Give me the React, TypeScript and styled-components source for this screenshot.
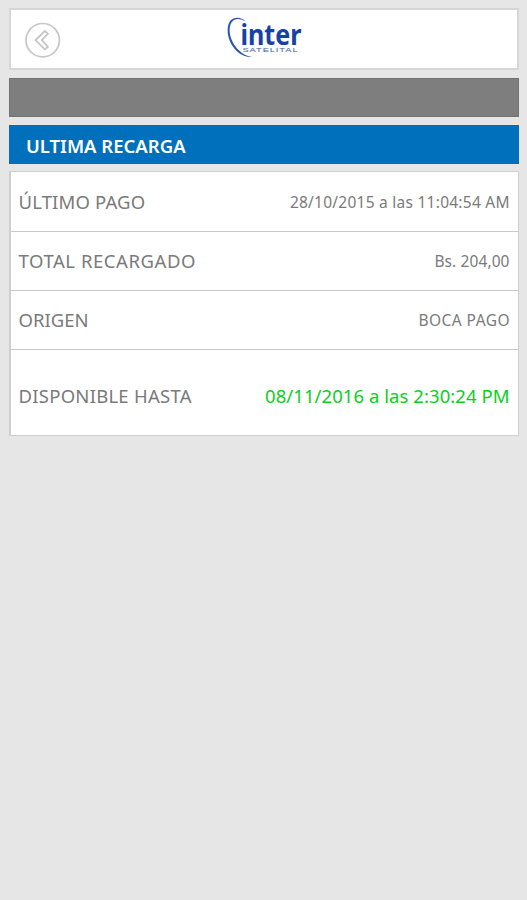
import React from "react";
import styled, { createGlobalStyle } from "styled-components";

const GlobalStyle = createGlobalStyle`
  body {
    margin: 0;
    background: #e6e6e6;
    font-family: "Noto Sans", sans-serif;
  }
  * { box-sizing: border-box; }
`;

const Screen = styled.main`
  display: flex;
  flex-direction: column;
  min-height: 900px;
  padding: 8px 8px 0 9px;
`;

const Header = styled.header`
  display: grid;
  grid-template-columns: 1fr auto 1fr;
  height: 62px;
  padding: 0 14px;
  background: #fff;
  border: 2px solid #d6d6d6;
`;

const BackButton = styled.button`
  width: 36px;
  height: 36px;
  margin-top: 12px;
  padding: 0;
  border: 0;
  background: none;
  svg { display: block; }
`;

const Logo = styled.svg`
  display: block;
  margin-top: 5px;
  overflow: visible;
`;

const Banner = styled.div`
  height: 39px;
  margin-top: 8px;
  background: #7e7e7e;
  border: 1px solid #737373;
`;

const Title = styled.h1`
  height: 39px;
  margin: 8px 0 0;
  padding-left: 17px;
  background: #0070bc;
  color: #fff;
  font-size: 18.5px;
  font-weight: 600;
  line-height: 42px;
`;

const Panel = styled.dl`
  margin: 7px 0 0;
  background: #fff;
  border: solid #cfcfcf;
  border-width: 1px 1px 1px 2px;
`;

const Row = styled.div<{ $height: number; $shift: number }>`
  display: flex;
  align-items: center;
  justify-content: space-between;
  height: ${(p) => p.$height}px;
  padding: ${(p) => 4 + p.$shift}px 8.5px 4px 7.5px;
  & + & { border-top: 1px solid #c9c9c9; }
`;

const Label = styled.dt<{ $spacing: number }>`
  color: #7a7a7a;
  font-size: 18.5px;
  white-space: nowrap;
  letter-spacing: ${(p) => p.$spacing}px;
`;

const Value = styled.dd<{ $spacing: number; $active?: boolean }>`
  margin: 0 ${(p) => -p.$spacing}px 0 0;
  color: ${(p) => (p.$active ? "#0bcf1b" : "#7a7a7a")};
  font-size: ${(p) => (p.$active ? 18.5 : 15.5)}px;
  white-space: nowrap;
  letter-spacing: ${(p) => p.$spacing}px;
`;

const rows = [
  { label: "ÚLTIMO PAGO", value: "28/10/2015 a las 11:04:54 AM", height: 59, shift: 0, ls: 0.15, vs: 0.25 },
  { label: "TOTAL RECARGADO", value: "Bs. 204,00", height: 59, shift: -1, ls: 0.55, vs: 0.1 },
  { label: "ORIGEN", value: "BOCA PAGO", height: 59, shift: -1, ls: 0, vs: 0.43 },
  { label: "DISPONIBLE HASTA", value: "08/11/2016 a las 2:30:24 PM", height: 86, shift: 6, ls: 0.25, vs: 0.06, active: true },
];

export default function App() {
  return (
    <>
      <GlobalStyle />
      <Screen>
        <Header>
          <BackButton aria-label="Volver">
            <svg width="36" height="36" viewBox="0 0 36 36" fill="none" stroke="#c6c6c6">
              <circle cx="17.7" cy="18.2" r="16.7" strokeWidth="1.7" />
              <path d="M10.6 18.2 L19.8 9 L23 11.6 L16.8 18.2 L23 24.8 L19.8 27.4 Z" strokeWidth="1.8" strokeLinejoin="round" />
            </svg>
          </BackButton>
          <Logo width="80" height="46" viewBox="0 0 80 46" role="img" aria-label="Inter Satelital">
            <path d="M21.5 6.5 C17 1.500 9 1.500 5.500 7 C-1 19 10 43 28 42 C13 39.500 2.500 22 6.500 9.500 C9 3 16 2.800 21.500 6.500 Z" fill="#2b56b0" />
            <text x="16.5" y="30" textLength="61" lengthAdjust="spacingAndGlyphs" fontFamily="Noto Sans, sans-serif" fontSize="28" fontWeight="700" fill="#1742a5">inter</text>
            <text x="18.5" y="36.800" textLength="56" lengthAdjust="spacingAndGlyphs" letterSpacing="0.6" fontFamily="Liberation Sans, sans-serif" fontSize="6" fontWeight="400" fill="#3b61ae">SATELITAL</text>
          </Logo>
        </Header>
        <Banner />
        <Title>ULTIMA RECARGA</Title>
        <Panel>
          {rows.map((r) => (
            <Row key={r.label} $height={r.height} $shift={r.shift}>
              <Label $spacing={r.ls}>{r.label}</Label>
              <Value $spacing={r.vs} $active={r.active}>{r.value}</Value>
            </Row>
          ))}
        </Panel>
      </Screen>
    </>
  );
}
